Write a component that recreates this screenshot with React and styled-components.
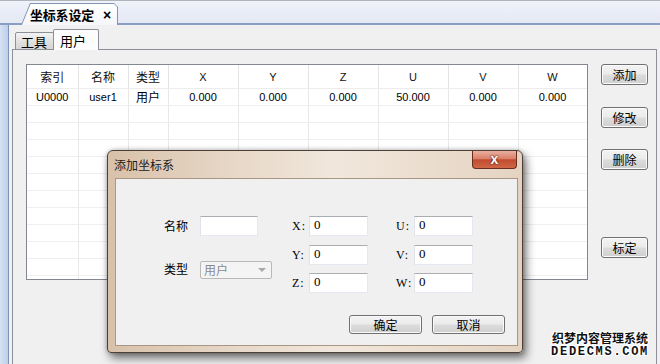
import React from 'react';
import styled, { createGlobalStyle } from 'styled-components';

const CJK = `"Noto Sans CJK SC", "Liberation Sans", sans-serif`;
const LATIN = `"Liberation Sans", "Noto Sans CJK SC", sans-serif`;
const SERIF = `"Liberation Serif", "DejaVu Serif", serif`;
const MONO = `"Liberation Mono", "DejaVu Sans Mono", monospace`;

const GlobalStyle = createGlobalStyle`
  html, body { margin: 0; padding: 0; }
  body {
    width: 660px; height: 364px; overflow: hidden;
    background: #f0f0f0;
    font-family: ${CJK};
    color: #000;
  }
`;

const Screen = styled.div`
  position: relative;
  width: 660px;
  height: 364px;
  display: flex;
  flex-direction: column;
  overflow: hidden;
  background: #f0f0f0;
`;

/* ---------- document tab bar ---------- */
const DocBar = styled.div`
  height: 25px;
  flex: none;
  box-sizing: border-box;
  background: linear-gradient(#b2b4bd 0, #b2b4bd 1px, #f0f2fa 1px, #e4e8f4 100%);
  border-bottom: 2px solid #8a9dc2;
  display: flex;
  align-items: flex-end;
  padding-left: 21px;
`;

const DocTab = styled.div`
  position: relative;
  z-index: 1;
  width: 97px;
  height: 22px;
  margin-bottom: -2px;
  padding: 1px 1px 0 1px;
  box-sizing: border-box;
  background: #8594b3;
  clip-path: polygon(9px 0, calc(100% - 4px) 0, 100% 4px, 100% 100%, 0 100%);
  display: flex;
`;

const DocTabFace = styled.div`
  flex: 1;
  background: linear-gradient(#ffffff, #f4f6fb);
  clip-path: polygon(8.6px 0, calc(100% - 3px) 0, 100% 3px, 100% 100%, 0 100%);
  display: flex;
  align-items: center;
  padding-left: 8px;
  gap: 9px;
  font-size: 13px;
  font-weight: 700;
  letter-spacing: -0.2px;
`;

const CloseMark = styled.span`
  font-family: ${LATIN};
  font-size: 14px;
  font-weight: 700;
`;

/* ---------- body ---------- */
const Body = styled.div`
  flex: 1;
  display: flex;
  min-height: 0;
`;

const SideRail = styled.div`
  width: 8px;
  flex: none;
  background: linear-gradient(to right, #d6e2f3, #bccfe9);
  border-right: 1px solid #7e94ba;
`;

const Main = styled.div`
  flex: 1;
  display: flex;
  flex-direction: column;
  padding: 4px 0 0 3px;
  min-width: 0;
  background: #f0f0f0;
`;

const TabStrip = styled.div`
  height: 21px;
  flex: none;
  display: flex;
  align-items: flex-end;
  padding-left: 3px;
  margin-bottom: -1px;
  position: relative;
  z-index: 1;
`;

const InnerTab = styled.div`
  box-sizing: border-box;
  height: ${p => (p.$active ? '21px' : '18px')};
  width: ${p => (p.$active ? '46px' : '39px')};
  margin-left: ${p => (p.$active ? '-1px' : '0')};
  border: 1px solid #8e9097;
  border-bottom: ${p => (p.$active ? 'none' : '1px solid #8e9097')};
  border-radius: 2px 2px 0 0;
  background: ${p => (p.$active ? '#fcfcfc' : 'linear-gradient(#f3f3f3, #e2e2e2 50%, #d6d6d6)')};
  display: flex;
  align-items: center;
  padding-left: ${p => (p.$active ? '6px' : '5px')};
  font-size: 13px;
  line-height: 1;
`;

const Panel = styled.div`
  flex: 1;
  box-sizing: border-box;
  border: 1px solid #8e9097;
  border-bottom: none;
  margin-right: 3px;
  background: #f0f0f0;
  display: flex;
  align-items: flex-start;
  padding: 14px 0 0 13px;
`;

/* ---------- table ---------- */
const TableFrame = styled.div`
  width: 562px;
  height: 216px;
  flex: none;
  box-sizing: border-box;
  border: 1px solid #828790;
  background: #fff;
  overflow: hidden;
`;

const GridTable = styled.table`
  width: 560px;
  table-layout: fixed;
  border-collapse: collapse;
`;

const HeadCell = styled.th`
  height: 23px;
  padding: 0;
  font-weight: 400;
  font-family: ${p => (p.$latin ? LATIN : CJK)};
  font-size: ${p => (p.$latin ? '11px' : '12px')};
  text-align: center;
  border-right: 1px solid #e4e4e4;
  border-bottom: 1px solid #ececec;
  color: #111;
`;

const Cell = styled.td`
  height: 16px;
  padding: 0;
  font-family: ${p => (p.$cjk ? CJK : LATIN)};
  font-size: ${p => (p.$cjk ? '12px' : '11px')};
  text-align: center;
  border-right: 1px solid #e8e8e8;
  border-bottom: 1px solid #efefef;
  line-height: 16px;
  white-space: nowrap;
  overflow: hidden;
`;

const ButtonColumn = styled.div`
  display: flex;
  flex-direction: column;
  margin-left: 13px;
`;

const SideButton = styled.button`
  width: 47px;
  height: 21px;
  margin-top: ${p => p.$gap || 0}px;
  padding: 0;
  border: 1px solid #707070;
  border-radius: 3px;
  background: linear-gradient(#f3f3f3 0%, #ebebeb 48%, #dcdcdc 52%, #cfcfcf 100%);
  box-shadow: inset 0 0 0 1px #fbfbfb;
  font-family: ${CJK};
  font-size: 12px;
  color: #000;
  line-height: 1;
`;

/* ---------- dialog ---------- */
const Dialog = styled.div`
  position: absolute;
  left: 107px;
  top: 150px;
  width: 416px;
  height: 203px;
  box-sizing: border-box;
  border: 1px solid #4e4036;
  border-radius: 6px 6px 4px 4px;
  background: linear-gradient(to right, #d8c1aa 0%, #e9dbcc 35%, #f1e7dc 55%, #e4d3c1 100%);
  box-shadow: 3px 5px 10px rgba(0, 0, 0, 0.55), 0 0 4px rgba(0, 0, 0, 0.25);
  display: flex;
  flex-direction: column;
  z-index: 5;
`;

const TitleBar = styled.div`
  height: 27px;
  flex: none;
  display: flex;
  justify-content: space-between;
  align-items: flex-start;
`;

const TitleText = styled.div`
  padding: 7px 0 0 6px;
  font-size: 12px;
  line-height: 14px;
  color: #1a1a1a;
`;

const CloseButton = styled.div`
  width: 45px;
  height: 18px;
  box-sizing: border-box;
  margin-right: 5px;
  border: 1px solid #6a2c1e;
  border-top: none;
  border-radius: 0 0 4px 4px;
  background: linear-gradient(#eab0a0 0%, #d98068 45%, #c24b2f 52%, #cf6848 100%);
  display: flex;
  align-items: center;
  justify-content: center;
  font-family: ${LATIN};
  font-weight: 700;
  font-size: 14px;
  color: #fff;
  line-height: 1;
  padding-bottom: 2px;
  text-shadow: 0 0 2px #5a1a10, 0 0 1px #5a1a10;
`;

const Client = styled.div`
  flex: 1;
  margin: 0 4px 6px 7px;
  border: 1px solid #a99683;
  background: #f0f0f0;
  display: flex;
  flex-direction: column;
  padding: 37px 12px 0 44px;
`;

const FormArea = styled.div`
  display: flex;
  align-items: flex-start;
`;

const LeftGroup = styled.div`
  display: grid;
  grid-template-columns: 28px auto;
  grid-template-rows: 20px 18px;
  column-gap: 12px;
  row-gap: 25px;
  align-items: center;
`;

const CoordGroup = styled.div`
  display: grid;
  grid-template-columns: ${p => p.$labelWidth}px 59px;
  grid-auto-rows: 20px;
  column-gap: 4px;
  row-gap: 8.5px;
  align-items: center;
  margin-left: ${p => p.$offset}px;
`;

const FieldLabel = styled.div`
  font-size: 12px;
  text-align: right;
  line-height: 1;
  margin-top: ${p => p.$nudge || 0}px;
  white-space: nowrap;
`;

const AxisLabel = styled.div`
  font-family: ${SERIF};
  font-size: 12px;
  padding-left: 1px;
  line-height: 1;
  letter-spacing: 1px;
`;

const TextBox = styled.div`
  width: ${p => p.$w || 59}px;
  height: 20px;
  box-sizing: border-box;
  background: #fff;
  border: 1px solid #e3e9ef;
  border-top-color: #abadb3;
  border-left-color: #e2e3ea;
  font-family: ${SERIF};
  font-size: 13px;
  line-height: 16px;
  padding: 0 4px;
`;

const SelectBox = styled.div`
  width: 72px;
  height: 18px;
  box-sizing: border-box;
  border: 1px solid #b9b9b9;
  border-radius: 2px;
  background: #f4f4f4;
  display: flex;
  align-items: center;
  justify-content: space-between;
  padding: 0 5px 0 3px;
  font-size: 12px;
  color: #8a8a8a;
  line-height: 1;
`;

const Arrow = styled.span`
  width: 0;
  height: 0;
  border-left: 4px solid transparent;
  border-right: 4px solid transparent;
  border-top: 4px solid #a8a8a8;
`;

const ButtonRow = styled.div`
  display: flex;
  justify-content: flex-end;
  gap: 10px;
  margin-top: 22px;
`;

const DialogButton = styled.button`
  width: 73px;
  height: 19px;
  padding: 0;
  border: 1px solid #707070;
  border-radius: 3px;
  background: linear-gradient(#f3f3f3 0%, #ebebeb 48%, #dcdcdc 52%, #cfcfcf 100%);
  box-shadow: inset 0 0 0 1px #fafafa;
  font-family: ${CJK};
  font-size: 12px;
  color: #000;
  line-height: 1;
`;

/* ---------- watermark ---------- */
const Watermark = styled.div`
  position: absolute;
  right: 11px;
  bottom: 6px;
  z-index: 6;
  display: flex;
  flex-direction: column;
  align-items: center;
  gap: 2px;
  color: #111;
  text-shadow: 1px 0 0 #fff, -1px 0 0 #fff, 0 1px 0 #fff, 0 -1px 0 #fff,
    1px 1px 0 #fff, -1px -1px 0 #fff, 1px -1px 0 #fff, -1px 1px 0 #fff;
`;

const WatermarkCn = styled.div`
  font-size: 12px;
  font-weight: 700;
  line-height: 13px;
`;

const WatermarkEn = styled.div`
  font-family: ${MONO};
  font-size: 12px;
  font-weight: 700;
  line-height: 12px;
  letter-spacing: 1.7px;
`;

const columns = [
  { key: '索引', w: 51 },
  { key: '名称', w: 50 },
  { key: '类型', w: 40 },
  { key: 'X', w: 70, latin: true },
  { key: 'Y', w: 70, latin: true },
  { key: 'Z', w: 70, latin: true },
  { key: 'U', w: 70, latin: true },
  { key: 'V', w: 70, latin: true },
  { key: 'W', w: 69, latin: true },
];

const dataRow = ['U0000', 'user1', '用户', '0.000', '0.000', '0.000', '50.000', '0.000', '0.000'];

export default function App() {
  const emptyRows = Array.from({ length: 11 });
  return (
    <>
      <GlobalStyle />
      <Screen>
        <DocBar>
          <DocTab>
            <DocTabFace>
              <span>坐标系设定</span>
              <CloseMark>×</CloseMark>
            </DocTabFace>
          </DocTab>
        </DocBar>
        <Body>
          <SideRail />
          <Main>
            <TabStrip>
              <InnerTab>工具</InnerTab>
              <InnerTab $active>用户</InnerTab>
            </TabStrip>
            <Panel>
              <TableFrame>
                <GridTable>
                  <colgroup>
                    {columns.map(c => (
                      <col key={c.key} style={{ width: c.w }} />
                    ))}
                  </colgroup>
                  <thead>
                    <tr>
                      {columns.map(c => (
                        <HeadCell key={c.key} $latin={c.latin}>{c.key}</HeadCell>
                      ))}
                    </tr>
                  </thead>
                  <tbody>
                    <tr>
                      {dataRow.map((v, i) => (
                        <Cell key={i} $cjk={i === 2}>{v}</Cell>
                      ))}
                    </tr>
                    {emptyRows.map((_, r) => (
                      <tr key={r}>
                        {columns.map(c => (
                          <Cell key={c.key} />
                        ))}
                      </tr>
                    ))}
                  </tbody>
                </GridTable>
              </TableFrame>
              <ButtonColumn>
                <SideButton>添加</SideButton>
                <SideButton $gap={22}>修改</SideButton>
                <SideButton $gap={21}>删除</SideButton>
                <SideButton $gap={67}>标定</SideButton>
              </ButtonColumn>
            </Panel>
          </Main>
        </Body>

        <Dialog>
          <TitleBar>
            <TitleText>添加坐标系</TitleText>
            <CloseButton>x</CloseButton>
          </TitleBar>
          <Client>
            <FormArea>
              <LeftGroup>
                <FieldLabel>名称</FieldLabel>
                <TextBox $w={58} />
                <FieldLabel $nudge={-2}>类型</FieldLabel>
                <SelectBox>
                  <span>用户</span>
                  <Arrow />
                </SelectBox>
              </LeftGroup>
              <CoordGroup $labelWidth={14} $offset={19}>
                <AxisLabel>X:</AxisLabel>
                <TextBox>0</TextBox>
                <AxisLabel>Y:</AxisLabel>
                <TextBox>0</TextBox>
                <AxisLabel>Z:</AxisLabel>
                <TextBox>0</TextBox>
              </CoordGroup>
              <CoordGroup $labelWidth={15} $offset={27}>
                <AxisLabel>U:</AxisLabel>
                <TextBox>0</TextBox>
                <AxisLabel>V:</AxisLabel>
                <TextBox>0</TextBox>
                <AxisLabel>W:</AxisLabel>
                <TextBox>0</TextBox>
              </CoordGroup>
            </FormArea>
            <ButtonRow>
              <DialogButton>确定</DialogButton>
              <DialogButton>取消</DialogButton>
            </ButtonRow>
          </Client>
        </Dialog>

        <Watermark>
          <WatermarkCn>织梦内容管理系统</WatermarkCn>
          <WatermarkEn>DEDECMS.COM</WatermarkEn>
        </Watermark>
      </Screen>
    </>
  );
}
